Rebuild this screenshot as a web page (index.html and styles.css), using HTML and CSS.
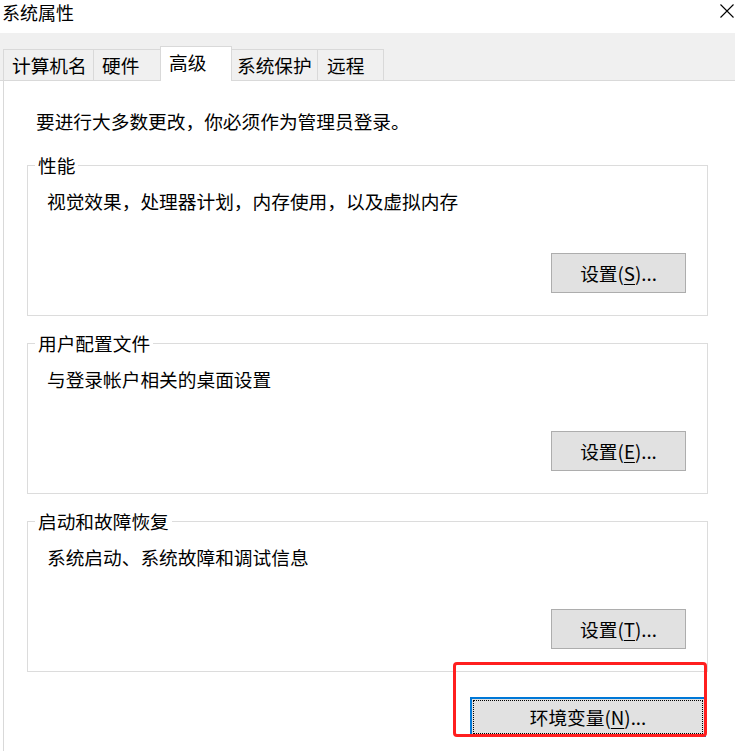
FILE: index.html
```html
<!DOCTYPE html>
<html lang="zh-CN">
<head>
<meta charset="utf-8">
<title>系统属性</title>
<link rel="stylesheet" href="styles.css">
</head>
<body>
<div class="window">
  <div class="titlebar">
    <span class="title">系统属性</span>
    <svg class="close" viewBox="0 0 14 14" width="14" height="14"><path d="M0.5 0.5L13.5 13.5M13.5 0.5L0.5 13.5" stroke="#000" stroke-width="1.1" fill="none"/></svg>
  </div>
  <div class="tabstrip">
    <div class="tab tab-1">计算机名</div>
    <div class="tab tab-2">硬件</div>
    <div class="tab tab-3 selected">高级</div>
    <div class="tab tab-4">系统保护</div>
    <div class="tab tab-5">远程</div>
  </div>
  <div class="panel">
    <p class="intro">要进行大多数更改，你必须作为管理员登录。</p>
    <fieldset class="group">
      <legend>性能</legend>
      <p class="desc">视觉效果，处理器计划，内存使用，以及虚拟内存</p>
      <div class="actions"><button class="btn">设置(<u>S</u>)...</button></div>
    </fieldset>
    <fieldset class="group">
      <legend>用户配置文件</legend>
      <p class="desc">与登录帐户相关的桌面设置</p>
      <div class="actions"><button class="btn">设置(<u>E</u>)...</button></div>
    </fieldset>
    <fieldset class="group">
      <legend>启动和故障恢复</legend>
      <p class="desc">系统启动、系统故障和调试信息</p>
      <div class="actions"><button class="btn">设置(<u>T</u>)...</button></div>
    </fieldset>
    <div class="footer">
      <button class="btn btn-focus"><span class="focus-ring">环境变量(<u>N</u>)...</span></button>
    </div>
  </div>
  <div class="annot"></div>
</div>
</body>
</html>
```

FILE: styles.css
```css
html, body {
  margin: 0;
  padding: 0;
  background: #fff;
}

body {
  font-family: "Noto Sans CJK SC", "Microsoft YaHei", sans-serif;
  font-size: 18.7px;
  color: #000;
  width: 735px;
  height: 751px;
  overflow: hidden;
}

.window {
  position: relative;
  width: 735px;
  height: 751px;
  overflow: hidden;
}

.titlebar {
  height: 33px;
  display: flex;
  justify-content: space-between;
  align-items: flex-start;
}

.title {
  padding-left: 2px;
  font-size: 18px;
  line-height: 25px;
}

.close {
  margin: 4px 1px 0 0;
  display: block;
}

.tabstrip {
  height: 47px;
  background: #f0f0f0;
  border-bottom: 1px solid #d9d9d9;
  display: flex;
  align-items: flex-end;
  padding-left: 3px;
}

.tab {
  box-sizing: border-box;
  height: 31px;
  border: 1px solid #d9d9d9;
  border-bottom: none;
  margin-right: -1px;
  padding-left: 8px;
  line-height: 30px;
  white-space: nowrap;
  background: #f0f0f0;
}

.tab-1 { width: 91px; }
.tab-2 { width: 68px; }
.tab-3 { width: 72px; }
.tab-4 { width: 87px; padding-left: 5px; }
.tab-5 { width: 67px; padding-left: 9px; }

.tab.selected {
  position: relative;
  z-index: 1;
  height: 35px;
  margin-bottom: -1px;
  background: #fff;
}

.panel {
  margin-left: 3px;
  border-left: 1px solid #d9d9d9;
  padding-top: 29px;
  height: 700px;
}

.intro {
  margin: 0 0 22px 32px;
  line-height: 22px;
}

.group {
  box-sizing: border-box;
  width: 681px;
  margin: 0 0 16px 23px;
  padding: 0 21px 22px 7px;
  border: 1px solid #dcdcdc;
}

.group legend {
  padding: 0 3px;
  line-height: 22px;
}

.desc {
  margin: 14px 0 0 12px;
  line-height: 22px;
}

.actions {
  display: flex;
  justify-content: flex-end;
  margin-top: 41px;
}

.btn {
  box-sizing: border-box;
  width: 135px;
  height: 40px;
  background: #e1e1e1;
  border: 1px solid #adadad;
  font-family: inherit;
  font-size: 18.7px;
  color: #000;
  padding: 0;
  line-height: 22px;
}

.btn u {
  text-decoration-thickness: 1px;
  text-underline-offset: 3px;
}

.footer {
  width: 681px;
  margin: 25px 0 0 23px;
  box-sizing: border-box;
  padding-left: 443px;
}

.btn-focus {
  width: 236px;
  border: 2px solid #0078d7;
  padding: 1px;
}

.focus-ring {
  display: flex;
  align-items: center;
  justify-content: center;
  height: 100%;
  box-sizing: border-box;
  border: 1px dotted #000;
}

.annot {
  position: absolute;
  left: 453px;
  top: 662px;
  width: 254px;
  height: 75px;
  box-sizing: border-box;
  border: 3px solid #ff1f1f;
  border-radius: 4px;
}
```
